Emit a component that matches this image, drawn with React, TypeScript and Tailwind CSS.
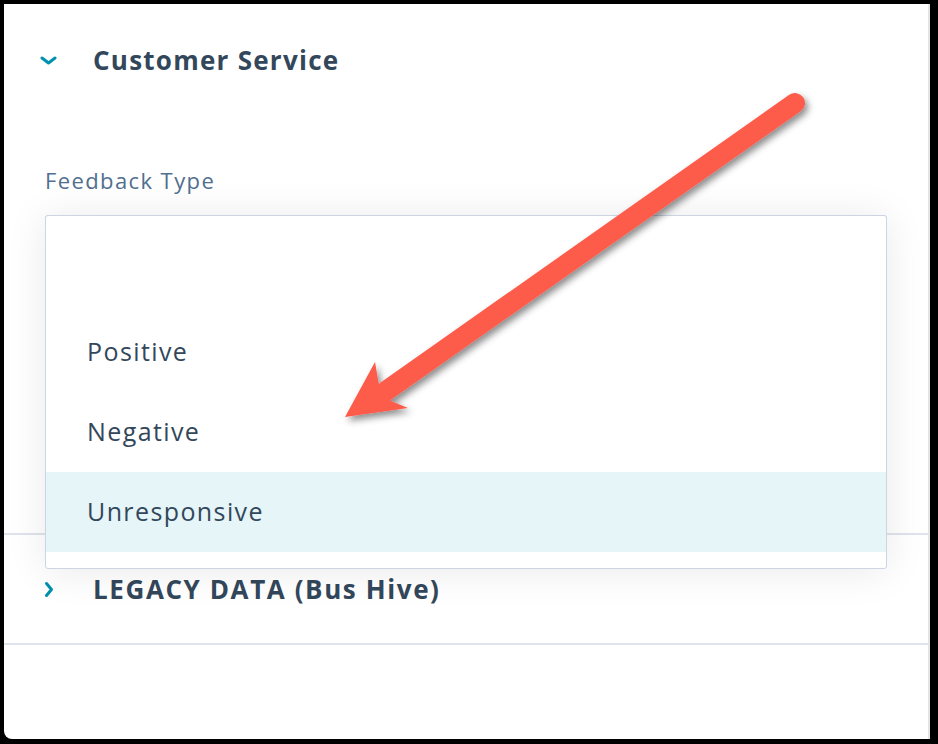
import React from "react";

const font = { fontFamily: '"Open Sans", "Liberation Sans", sans-serif' };

function ChevronDown() {
  return (
    <svg width="17" height="9" viewBox="0 0 17 9" className="block">
      <path d="M2 2 L8.5 7 L15 2" fill="none" stroke="#0091ae" strokeWidth="3" strokeLinecap="round" strokeLinejoin="round" />
    </svg>
  );
}

function ChevronRight() {
  return (
    <svg width="10" height="17" viewBox="0 0 10 17" className="block">
      <path d="M2.5 2.5 L7.5 8.5 L2.5 14.5" fill="none" stroke="#0091ae" strokeWidth="3" strokeLinecap="round" strokeLinejoin="round" />
    </svg>
  );
}

export default function App() {
  return (
    <div className="w-[938px] h-[744px] bg-black pt-[4px] pl-[4px] relative overflow-hidden" style={font}>
      <div className="w-[926px] h-[735px] bg-white rounded-bl-[8px] border-r-2 border-[#e4e4e4] flex flex-col">
        {/* Customer Service header */}
        <div className="h-[112px] flex items-center pl-[36px] shrink-0">
          <div className="w-[17px] flex justify-center"><ChevronDown /></div>
          <div className="ml-[36px] text-[26px] font-bold tracking-[1.25px] text-[#33475b] leading-none">Customer Service</div>
        </div>
        <div className="mt-[50px] pl-[41px] text-[22px] tracking-[1.4px] leading-[28px] text-[#516f90]">Feedback Type</div>
        <div className="mt-[21px] ml-[41px] w-[842px] h-[40px] border border-[#cbd6e2] rounded-[3px] bg-[#f5f8fa]" />
        <div className="mt-[278px] border-t-2 border-[#dfe3eb]" />
        {/* Legacy header */}
        <div className="h-[108px] flex items-center pl-[40px] shrink-0">
          <div className="w-[10px] flex justify-center"><ChevronRight /></div>
          <div className="ml-[39px] text-[26px] font-bold tracking-[1.6px] text-[#33475b] leading-none">LEGACY DATA (Bus Hive)</div>
        </div>
        <div className="border-t-2 border-[#dfe3eb]" />
      </div>

      {/* Open dropdown menu */}
      <div className="absolute left-[45px] top-[215px] w-[842px] h-[354px] bg-white border border-[#cbd6e2] rounded-[3px] shadow-[0_2px_40px_rgba(0,0,0,0.09)] py-[16px] flex flex-col">
        <div className="h-[80px]" />
        <div className="h-[80px] flex items-center pl-[41px] text-[25px] tracking-[1.4px] text-[#33475b]">Positive</div>
        <div className="h-[80px] flex items-center pl-[41px] text-[25px] tracking-[1.4px] text-[#33475b]">Negative</div>
        <div className="h-[80px] flex items-center pl-[41px] text-[25px] tracking-[1.4px] text-[#33475b] bg-[#e5f5f8]">Unresponsive</div>
      </div>

      {/* Annotation arrow */}
      <svg className="absolute left-0 top-0 pointer-events-none" width="938" height="744" viewBox="0 0 938 744">
        <defs>
          <filter id="sh" x="-20%" y="-20%" width="140%" height="140%">
            <feDropShadow dx="3" dy="4" stdDeviation="3.5" floodColor="#000" floodOpacity="0.45" />
          </filter>
        </defs>
        <g filter="url(#sh)">
          <line x1="795" y1="103" x2="386" y2="391" stroke="#fd5b4c" strokeWidth="20" strokeLinecap="round" />
          <polygon points="345,417 375,362 379,385 391,401 408,408" fill="#fd5b4c" />
        </g>
      </svg>
    </div>
  );
}
